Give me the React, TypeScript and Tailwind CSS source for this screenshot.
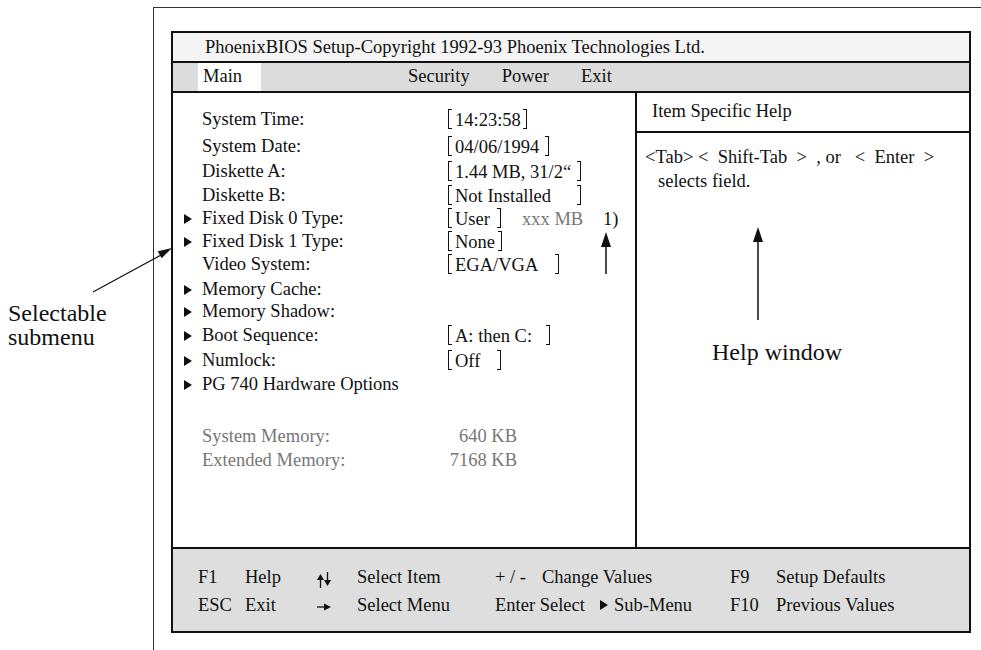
import React from "react";

const Tri = () => (
  <svg width="8" height="10" viewBox="0 0 8 10" className="block">
    <polygon points="0,0 8,5 0,10" fill="#111" />
  </svg>
);

const LB = () => <span className="inline-block w-[4px] h-[20px] border-l-[1.5px] border-y border-[#111] self-end mb-[2px]" />;
const RB = () => <span className="inline-block w-[4px] h-[20px] border-r-[1.5px] border-y border-[#111] self-end mb-[2px]" />;

type Row = {
  h: string;
  arrow?: boolean;
  gray?: boolean;
  label: string;
  value?: React.ReactNode;
};

const Br = ({ text, w, extra }: { text: string; w: string; extra?: React.ReactNode }) => (
  <div className="flex items-end h-full pb-[1px]">
    <LB />
    <span className={`ml-[3px] whitespace-pre leading-[22px] ${w}`}>{text}</span>
    <RB />
    {extra}
  </div>
);

const rows: Row[] = [
  { h: "h-[27px]", label: "System Time:", value: <Br text="14:23:58" w="w-[68px]" /> },
  { h: "h-[25px]", label: "System Date:", value: <Br text="04/06/1994" w="w-[90px]" /> },
  { h: "h-[24px]", label: "Diskette A:", value: <Br text="1.44 MB, 31/2“" w="w-[122px]" /> },
  { h: "h-[23px]", label: "Diskette B:", value: <Br text="Not Installed" w="w-[122px]" /> },
  {
    h: "h-[23px]",
    arrow: true,
    label: "Fixed Disk 0 Type:",
    value: (
      <Br
        text="User"
        w="w-[42px]"
        extra={
          <>
            <span className="ml-[21px] leading-[22px] text-[#777] w-[81px]">xxx MB</span>
            <span className="leading-[22px]">1)</span>
          </>
        }
      />
    ),
  },
  { h: "h-[23px]", arrow: true, label: "Fixed Disk 1 Type:", value: <Br text="None" w="w-[43px]" /> },
  { h: "h-[25px]", label: "Video System:", value: <Br text="EGA/VGA" w="w-[100px]" /> },
  { h: "h-[22px]", arrow: true, label: "Memory Cache:" },
  { h: "h-[24px]", arrow: true, label: "Memory Shadow:" },
  { h: "h-[25px]", arrow: true, label: "Boot Sequence:", value: <Br text="A: then C:" w="w-[91px]" /> },
  { h: "h-[24px]", arrow: true, label: "Numlock:", value: <Br text="Off" w="w-[42px]" /> },
  { h: "h-[52px]", arrow: true, label: "PG 740 Hardware Options" },
  {
    h: "h-[24px]",
    gray: true,
    label: "System Memory:",
    value: <span className="block w-[69px] text-right text-[#777]">640 KB</span>,
  },
  {
    h: "h-[24px]",
    gray: true,
    label: "Extended Memory:",
    value: <span className="block w-[69px] text-right text-[#777]">7168 KB</span>,
  },
];

export default function App() {
  return (
    <div
      className="w-[981px] h-[650px] bg-white flex relative overflow-hidden text-[#111]"
      style={{ fontFamily: '"Liberation Serif", "Times New Roman", serif' }}
    >
      {/* annotation column */}
      <div className="w-[153px] shrink-0 pt-[301px] pl-[8px] text-[24px] leading-[24px]">
        <div>Selectable</div>
        <div>submenu</div>
      </div>

      {/* outer frame */}
      <div className="flex-1 mt-[7px] border-l border-t border-[#333] pl-[17px] pt-[23px]">
        <div className="w-[800px] h-[602px] border-2 border-[#111] flex flex-col text-[18.5px]">
          {/* title */}
          <div className="h-[30px] shrink-0 bg-[#f4f4f4] border-b-2 border-[#111] flex items-center pl-[32px] leading-none">
            PhoenixBIOS Setup-Copyright 1992-93 Phoenix Technologies Ltd.
          </div>
          {/* menu */}
          <div className="h-[30px] shrink-0 bg-[#dcdcdc] border-b-2 border-[#111] flex items-stretch pl-[25px]">
            <div className="bg-white w-[63px] pl-[5px] flex items-center">Main</div>
            <div className="flex items-center gap-[32px] ml-[147px]">
              <span>Security</span>
              <span>Power</span>
              <span>Exit</span>
            </div>
          </div>

          {/* body */}
          <div className="flex-1 flex min-h-0">
            <div className="w-[464px] shrink-0 border-r-2 border-[#111] pt-[15px] relative">
              {rows.map((r, i) => (
                <div key={i} className={`${r.h} flex items-start`}>
                  <div className="h-[24px] flex items-center w-[29px] pl-[11px] shrink-0">
                    {r.arrow ? <Tri /> : null}
                  </div>
                  <div className={`h-[24px] flex items-center w-[246px] shrink-0 whitespace-nowrap ${r.gray ? "text-[#777]" : ""}`}>
                    {r.label}
                  </div>
                  <div className="h-[24px] flex items-center">{r.value}</div>
                </div>
              ))}
              <svg
                width="10"
                height="42"
                viewBox="0 0 10 42"
                className="absolute left-[428px] top-[139px]"
              >
                <polygon points="5,0 10,15 0,15" fill="#111" />
                <line x1="5" y1="14" x2="5" y2="42" stroke="#111" strokeWidth="1.5" />
              </svg>
            </div>

            <div className="flex-1 flex flex-col">
              <div className="h-[40px] shrink-0 border-b-2 border-[#111] flex items-center pl-[15px]">
                Item Specific Help
              </div>
              <div className="pt-[12px] leading-[24px]">
                <div className="pl-[8px] whitespace-pre">{"<Tab> <  Shift-Tab  >  , or   <  Enter  >"}</div>
                <div className="pl-[21px]">selects field.</div>
                <svg width="10" height="93" viewBox="0 0 10 93" className="block ml-[116px] mt-[34px]">
                  <polygon points="5,0 10,15 0,15" fill="#111" />
                  <line x1="5" y1="14" x2="5" y2="93" stroke="#111" strokeWidth="1.5" />
                </svg>
                <div className="ml-[75px] mt-[18px] text-[24px] leading-[28px]">Help window</div>
              </div>
            </div>
          </div>

          {/* footer */}
          <div className="h-[84px] shrink-0 bg-[#dedede] border-t-2 border-[#111] pt-[14px] pl-[25px] leading-[28px]">
            <div className="flex h-[28px] items-center">
              <span className="w-[47px]">F1</span>
              <span className="w-[72px]">Help</span>
              <span className="w-[40px] flex items-center">
                <svg width="14" height="18" viewBox="0 0 14 18" className="mt-[6px]">
                  <polygon points="3.5,3 7,9 0,9" fill="#111" />
                  <line x1="3.5" y1="8" x2="3.5" y2="17" stroke="#111" strokeWidth="1.3" />
                  <line x1="10.5" y1="1" x2="10.5" y2="10" stroke="#111" strokeWidth="1.3" />
                  <polygon points="7,9 14,9 10.5,15" fill="#111" />
                </svg>
              </span>
              <span className="w-[138px]">Select Item</span>
              <span className="w-[47px] whitespace-pre">{"+ / -"}</span>
              <span className="w-[188px]">Change Values</span>
              <span className="w-[46px]">F9</span>
              <span>Setup Defaults</span>
            </div>
            <div className="flex h-[28px] items-center">
              <span className="w-[47px]">ESC</span>
              <span className="w-[72px]">Exit</span>
              <span className="w-[40px] flex items-center">
                <svg width="14" height="10" viewBox="0 0 14 10" className="mt-[4px]">
                  <line x1="0" y1="5" x2="8" y2="5" stroke="#111" strokeWidth="1.3" />
                  <polygon points="7,1.5 14,5 7,8.5" fill="#111" />
                </svg>
              </span>
              <span className="w-[138px]">Select Menu</span>
              <span className="w-[105px] whitespace-nowrap">Enter Select</span>
              <span className="flex items-center">
                <svg width="8" height="10" viewBox="0 0 8 10">
                  <polygon points="0,0 8,5 0,10" fill="#111" />
                </svg>
              </span>
              <span className="ml-[6px] w-[116px]">Sub-Menu</span>
              <span className="w-[46px]">F10</span>
              <span>Previous Values</span>
            </div>
          </div>
        </div>
      </div>

      {/* annotation arrow */}
      <svg
        width="981"
        height="650"
        viewBox="0 0 981 650"
        className="absolute left-0 top-0 pointer-events-none"
      >
        <line x1="93" y1="292" x2="162" y2="254.5" stroke="#111" strokeWidth="1.2" />
        <polygon points="172,248 161.6,258.2 157.8,251.2" fill="#111" />
      </svg>
    </div>
  );
}
